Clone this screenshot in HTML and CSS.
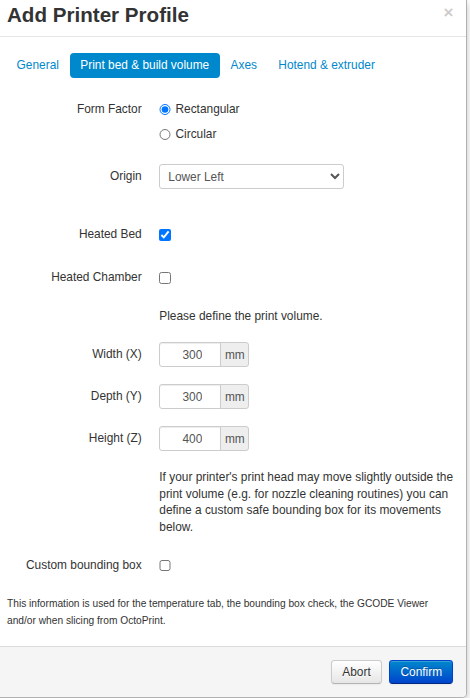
FILE: index.html
```html
<!DOCTYPE html>
<html>
<head>
<meta charset="utf-8">
<link rel="stylesheet" href="styles.css">
</head>
<body>
<div class="modal">
  <div class="modal-header">
    <h3>Add Printer Profile</h3>
    <span class="close">×</span>
  </div>
  <div class="modal-body">
    <ul class="tabs">
      <li><a>General</a></li>
      <li class="active"><a>Print bed &amp; build volume</a></li>
      <li><a>Axes</a></li>
      <li><a>Hotend &amp; extruder</a></li>
    </ul>
    <div class="group g-ff">
      <div class="label">Form Factor</div>
      <div class="controls">
        <label class="opt"><input type="radio" name="ff" checked> Rectangular</label>
        <label class="opt"><input type="radio" name="ff"> Circular</label>
      </div>
    </div>
    <div class="group g-origin">
      <div class="label">Origin</div>
      <div class="controls">
        <select class="select"><option>Lower Left</option><option>Center</option></select>
      </div>
    </div>
    <div class="group g-bed">
      <div class="label">Heated Bed</div>
      <div class="controls"><label class="opt"><input type="checkbox" checked></label></div>
    </div>
    <div class="group g-chamber">
      <div class="label">Heated Chamber</div>
      <div class="controls"><label class="opt"><input type="checkbox"></label></div>
    </div>
    <div class="group g-please">
      <div class="controls offset"><p class="help">Please define the print volume.</p></div>
    </div>
    <div class="group g-dim">
      <div class="label">Width (X)</div>
      <div class="controls"><div class="append"><input class="num" type="text" value="300"><span class="addon">mm</span></div></div>
    </div>
    <div class="group g-dim">
      <div class="label">Depth (Y)</div>
      <div class="controls"><div class="append"><input class="num" type="text" value="300"><span class="addon">mm</span></div></div>
    </div>
    <div class="group g-dim">
      <div class="label">Height (Z)</div>
      <div class="controls"><div class="append"><input class="num" type="text" value="400"><span class="addon">mm</span></div></div>
    </div>
    <div class="group g-para">
      <div class="controls offset"><p class="para">If your printer's print head may move slightly outside the print volume (e.g. for nozzle cleaning routines) you can define a custom safe bounding box for its movements below.</p></div>
    </div>
    <div class="group g-custom">
      <div class="label">Custom bounding box</div>
      <div class="controls"><label class="opt"><input type="checkbox"></label></div>
    </div>
    <p class="info">This information is used for the temperature tab, the bounding box check, the GCODE Viewer and/or when slicing from OctoPrint.</p>
  </div>
  <div class="modal-footer">
    <button class="btn">Abort</button>
    <button class="btn btn-primary">Confirm</button>
  </div>
</div>
</body>
</html>
```
FILE: styles.css
```css
html, body {
  margin: 0;
  padding: 0;
  background: #fff;
}
body {
  font-family: "Liberation Sans", Arial, Helvetica, sans-serif;
  font-size: 11.9px;
  color: #333;
}
.modal {
  width: 467px;
  height: 698px;
  box-sizing: border-box;
  background: #fff;
  border-right: 1px solid rgba(0, 0, 0, 0.3);
  border-bottom: 1px solid rgba(0, 0, 0, 0.3);
  border-bottom-right-radius: 5px;
  box-shadow: 0 3px 7px rgba(0, 0, 0, 0.25);
  overflow: hidden;
  display: flex;
  flex-direction: column;
}
.modal-header {
  height: 35px;
  padding: 1px 12.7px 0 7px;
  border-bottom: 1px solid #e5e5e5;
  display: flex;
  justify-content: space-between;
  align-items: flex-start;
  flex: none;
}
.modal-header h3 {
  margin: 0;
  font-size: 20.6px;
  line-height: 28px;
  font-weight: bold;
  color: #333;
}
.close {
  margin-top: 2px;
  font-size: 17px;
  line-height: 20px;
  font-weight: bold;
  color: #000;
  opacity: 0.2;
}
.modal-body {
  flex: 1;
  padding: 16px 12.7px 0 7px;
}
.tabs {
  list-style: none;
  margin: 0 0 0 -0.8px;
  padding: 0;
  display: flex;
  gap: 0.6px;
}
.tabs a {
  display: block;
  padding: 4px 10.4px;
  line-height: 17px;
  border-radius: 4px;
  color: #0088cc;
}
.tabs .active a {
  background: #0088cc;
  color: #fff;
}
.group {
  display: flex;
  margin-top: 17px;
}
.label {
  width: 134.7px;
  flex: none;
  text-align: right;
  line-height: 25px;
}
.controls {
  margin-left: 17.6px;
  flex: 1;
}
.controls.offset {
  margin-left: 152.3px;
}
.g-ff { margin-top: 18.8px; }
.g-origin { margin-top: 17.5px; }
.g-bed { margin-top: 33.2px; }
.g-chamber { margin-top: 18px; }
.g-please { margin-top: 18px; }
.g-dim { margin-top: 17px; }
.g-para { margin-top: 17.5px; }
.g-custom { margin-top: 17.6px; }
.opt {
  display: flex;
  align-items: center;
  height: 25px;
  gap: 4.7px;
}
.opt input {
  margin: 0;
  width: 11.5px;
  height: 11.5px;
  flex: none;
}
.select {
  display: block;
  width: 185px;
  height: 25px;
  box-sizing: border-box;
  border: 1px solid #ccc;
  border-radius: 3px;
  background: #fff;
  color: #555;
  font-family: inherit;
  font-size: 11.9px;
  padding: 0 4px;
}
.help {
  margin: 0;
  line-height: 17px;
}
.append {
  display: flex;
  height: 25px;
}
.num {
  width: 62px;
  height: 25px;
  box-sizing: border-box;
  margin: 0;
  border: 1px solid #ccc;
  border-radius: 3px 0 0 3px;
  padding: 0 18px 0 4px;
  text-align: right;
  font-family: inherit;
  font-size: 11.9px;
  color: #555;
  box-shadow: inset 0 1px 1px rgba(0, 0, 0, 0.075);
}
.addon {
  width: 29px;
  height: 25px;
  box-sizing: border-box;
  margin-left: -1px;
  border: 1px solid #ccc;
  border-radius: 0 3px 3px 0;
  background: #eee;
  color: #555;
  display: flex;
  align-items: center;
  justify-content: center;
}
.para {
  margin: 0;
  line-height: 16.6px;
}
.info {
  margin: 17.5px 0 0;
  font-size: 10.2px;
  line-height: 17px;
}
.modal-footer {
  flex: none;
  height: 37px;
  padding: 13px 12.7px 0;
  background: #f5f5f5;
  border-top: 1px solid #ddd;
  display: flex;
  justify-content: flex-end;
  align-items: flex-start;
  gap: 7.4px;
}
.btn {
  height: 24px;
  margin: 0;
  padding: 0 10.2px;
  font-family: inherit;
  font-size: 11.9px;
  line-height: 22px;
  border-radius: 3.4px;
  border: 1px solid #ccc;
  border-bottom-color: #b3b3b3;
  color: #333;
  background: linear-gradient(#ffffff, #e6e6e6);
  box-shadow: inset 0 1px 0 rgba(255, 255, 255, 0.2), 0 1px 2px rgba(0, 0, 0, 0.05);
  text-shadow: 0 1px 1px rgba(255, 255, 255, 0.75);
}
.btn-primary {
  color: #fff;
  background: linear-gradient(#0088cc, #0044cc);
  border-color: #0044cc #0044cc #002a80;
  text-shadow: 0 -1px 0 rgba(0, 0, 0, 0.25);
}
```
